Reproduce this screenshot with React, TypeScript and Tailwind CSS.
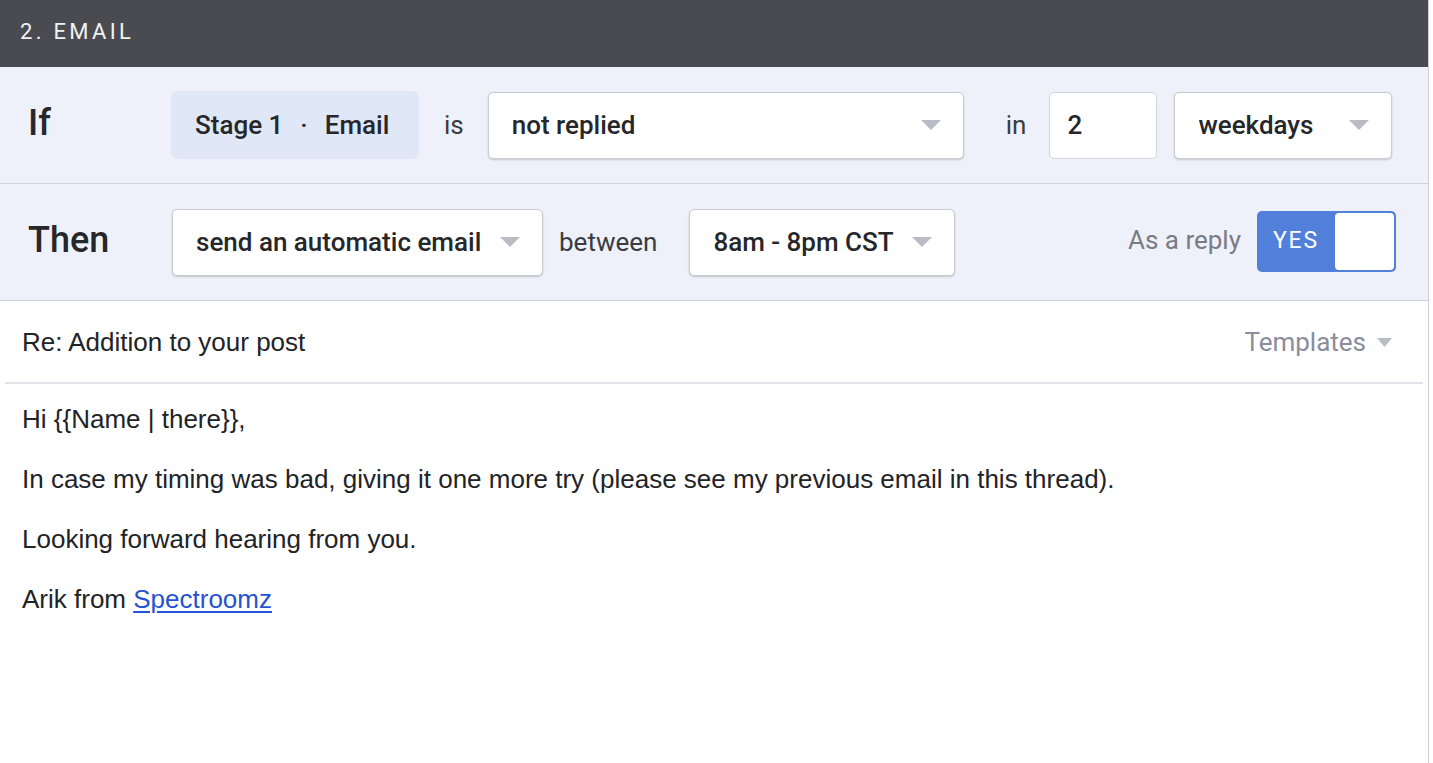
import React from "react";

function Caret({ className = "" }: { className?: string }) {
  return (
    <svg width="20" height="10" viewBox="0 0 20 10" className={className}>
      <path d="M0 0 L20 0 L10 10 Z" fill="#b9bcc5" />
    </svg>
  );
}

function Dropdown({ label, width }: { label: string; width: string }) {
  return (
    <div
      className={`${width} h-[67px] flex items-center justify-between pl-[23px] pr-[22px] bg-white border border-[#c9cbd1] rounded-[5px] shadow-[0_1px_2px_rgba(0,0,0,0.18)]`}
    >
      <span className="text-[26px] font-medium text-[#26272b]">{label}</span>
      <Caret />
    </div>
  );
}

export default function App() {
  return (
    <div
      className="w-[1429px] min-h-[763px] bg-white border-r border-[#cdd0d6]"
      style={{ fontFamily: "Roboto, 'Liberation Sans', sans-serif" }}
    >
      {/* Header */}
      <div className="h-[67px] bg-[#4a4b50] flex items-center pl-[20px] pb-[5px]">
        <span className="text-[22px] tracking-[0.15em] text-[#f2f2f2]">2. EMAIL</span>
      </div>

      {/* If row */}
      <div className="h-[117px] bg-[#eef1fa] border-b border-[#cfd2d9] flex items-center">
        <div className="w-[171px] pl-[28px] text-[36px] font-medium text-[#26272b] leading-none -mt-[5px]">If</div>
        <div className="w-[248px] h-[68px] rounded-[7px] bg-[#e0e7f7] flex items-center pl-[24px] text-[26px] font-medium text-[#26272b]">
          <span>Stage 1</span>
          <span className="mx-[17px]">·</span>
          <span>Email</span>
        </div>
        <span className="ml-[25px] mr-[24px] text-[26px] text-[#3a3b3f]">is</span>
        <Dropdown label="not replied" width="w-[476px]" />
        <span className="ml-[42px] mr-[23px] text-[26px] text-[#3a3b3f]">in</span>
        <div className="w-[108px] h-[67px] bg-white border border-[#d3d5da] rounded-[5px] flex items-center pl-[17px] text-[26px] font-medium text-[#26272b]">
          2
        </div>
        <div className="ml-[17px]">
          <Dropdown label="weekdays" width="w-[218px]" />
        </div>
      </div>

      {/* Then row */}
      <div className="h-[117px] bg-[#eef1fa] border-b border-[#cfd2d9] flex items-center">
        <div className="w-[172px] pl-[28px] text-[36px] font-medium text-[#26272b] leading-none -mt-[4px]">Then</div>
        <Dropdown label="send an automatic email" width="w-[371px]" />
        <span className="ml-[16px] mr-[32px] text-[26px] text-[#3a3b3f]">between</span>
        <Dropdown label="8am - 8pm CST" width="w-[266px]" />
        <div className="flex-1" />
        <span className="mr-[16px] text-[26px] text-[#7a7c83] -mt-[4px]">As a reply</span>
        <div className="mr-[32px] w-[139px] h-[61px] rounded-[5px] bg-[#527fd9] flex items-stretch -mt-[2px]">
          <div className="w-[78px] flex items-center justify-center text-[23px] tracking-[0.08em] text-white">
            YES
          </div>
          <div className="flex-1 my-[2px] mr-[2px] bg-white rounded-[4px]" />
        </div>
      </div>

      {/* Subject row */}
      <div className="mx-[5px] h-[83px] border-b-2 border-[#e1e3e8] flex items-center justify-between pl-[17px] pr-[31px]">
        <span
          className="text-[26px] text-[#222327] mt-[2px]"
          style={{ fontFamily: "'Liberation Sans', Arial, sans-serif" }}
        >
          Re: Addition to your post
        </span>
        <div className="flex items-center gap-[11px] mt-[2px]">
          <span className="text-[26px] text-[#8a8d9b]">Templates</span>
          <svg width="15" height="9" viewBox="0 0 15 9">
            <path d="M0 0 L15 0 L7.5 9 Z" fill="#b9bcc5" />
          </svg>
        </div>
      </div>

      {/* Body */}
      <div
        className="pl-[22px] pt-[5px] text-[26px] text-[#222327]"
        style={{ fontFamily: "'Liberation Sans', Arial, sans-serif" }}
      >
        <p className="leading-[60px]">Hi {"{{Name | there}}"},</p>
        <p className="leading-[60px]">
          In case my timing was bad, giving it one more try (please see my previous email in this thread).
        </p>
        <p className="leading-[60px]">Looking forward hearing from you.</p>
        <p className="leading-[60px]">
          Arik from <a className="text-[#2553d4] underline underline-offset-[3px]">Spectroomz</a>
        </p>
      </div>
    </div>
  );
}
